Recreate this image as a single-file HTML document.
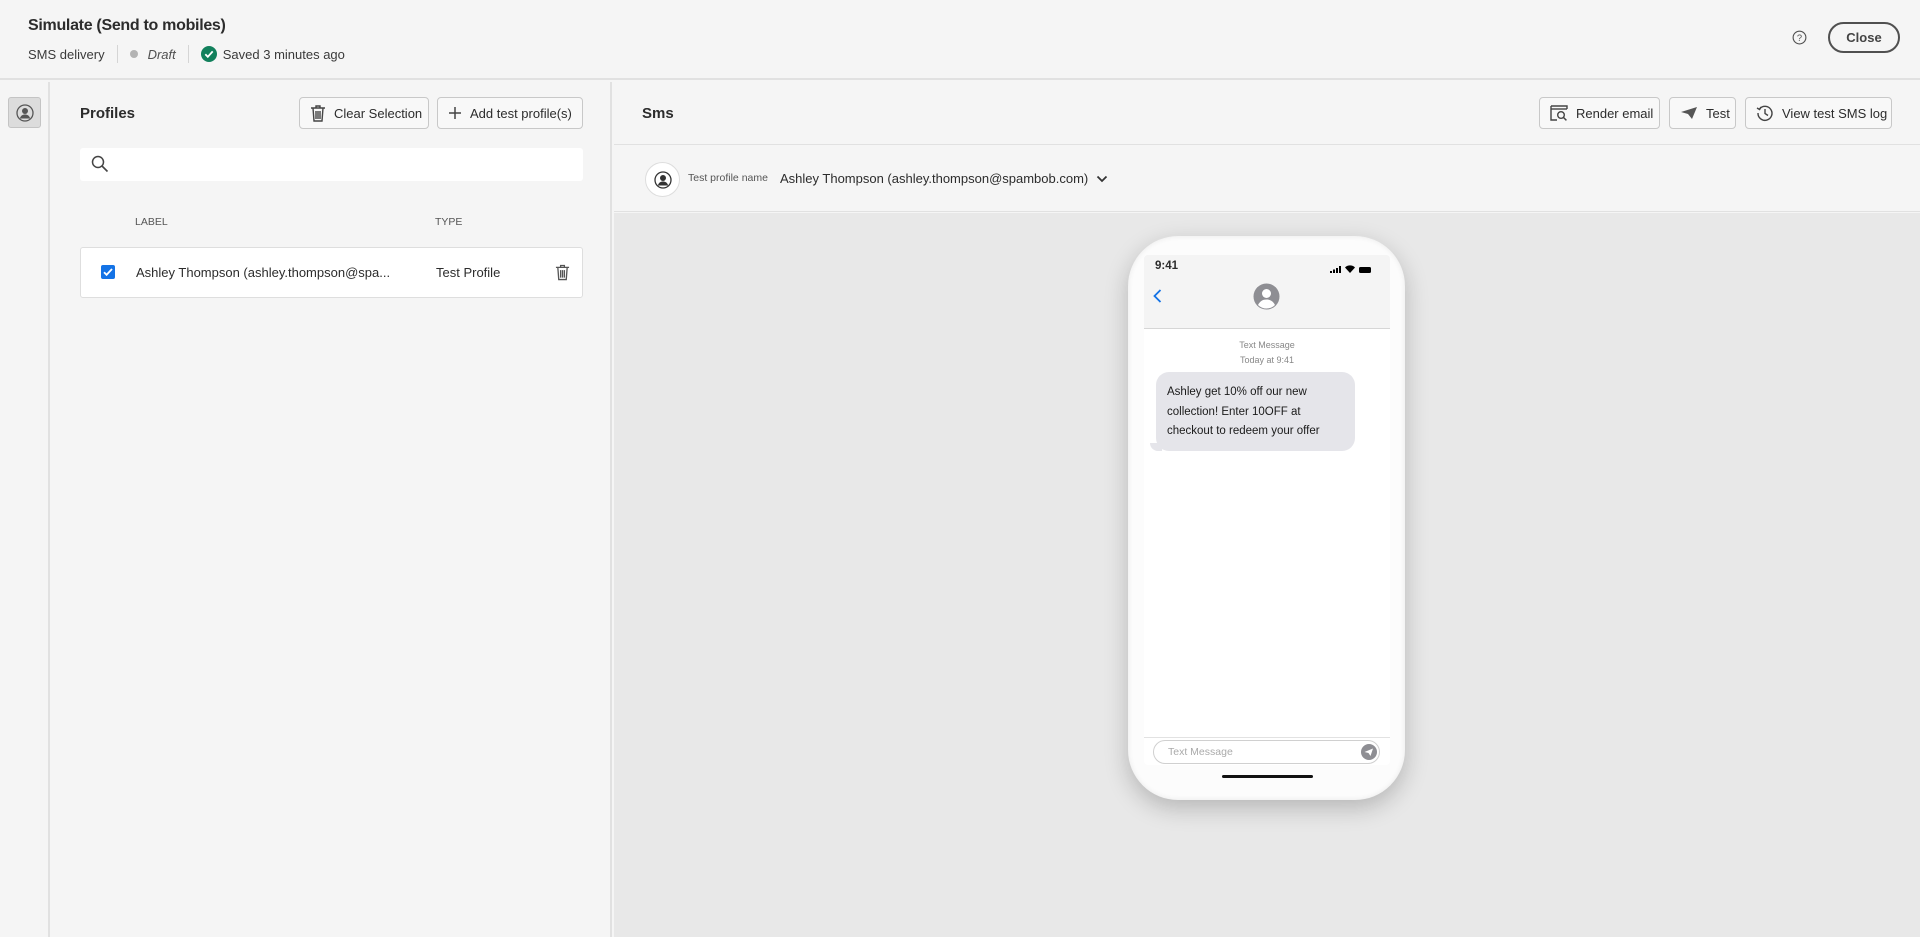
<!DOCTYPE html>
<html><head><meta charset="utf-8"><style>
*{box-sizing:border-box;margin:0;padding:0}
body{width:1920px;height:937px;overflow:hidden;background:#f5f5f5;font-family:"Liberation Sans",sans-serif;color:#2c2c2c;position:relative}
.a{position:absolute;white-space:nowrap}
.btn{position:absolute;border:1px solid #c8c8c8;border-radius:4px;background:#f8f8f8;font-size:13px;color:#2c2c2c;display:flex;align-items:center;padding-left:10px;gap:8px;white-space:nowrap}
svg{display:block}
</style></head><body>
<div class="a" style="left:0;top:0;width:1920px;height:80px;background:#f5f5f5;border-bottom:2px solid #e1e1e1"></div>
<div class="a" style="left:28px;top:17px;font-size:16px;font-weight:bold;color:#2c2c2c;letter-spacing:-0.3px">Simulate (Send to mobiles)</div>
<div class="a" style="left:28px;top:45px;font-size:13px;color:#3a3a3a;display:flex;align-items:center">
<span>SMS delivery</span><span style="width:1px;height:18px;background:#d5d5d5;margin:0 12px"></span>
<span style="width:8px;height:8px;border-radius:50%;background:#b3b3b3;margin-right:10px"></span><i style="color:#505050">Draft</i>
<span style="width:1px;height:18px;background:#d5d5d5;margin:0 12px"></span>
<svg width="16" height="16" viewBox="0 0 16 16"><circle cx="8" cy="8" r="8" fill="#12805c"/><path d="M4.3 8.3l2.5 2.5 4.9-5.4" stroke="#fff" stroke-width="1.8" fill="none"/></svg><span style="margin-left:6px">Saved 3 minutes ago</span></div>
<svg class="a" style="left:1792px;top:30px" width="15" height="15" viewBox="0 0 16 16"><circle cx="8" cy="8" r="6.8" fill="none" stroke="#505050" stroke-width="1.2"/><text x="8" y="11.5" font-size="10" text-anchor="middle" fill="#505050" font-family="Liberation Sans">?</text></svg>
<div class="a" style="left:1828px;top:22px;width:72px;height:31px;border:2px solid #505050;border-radius:16px;font-size:13px;font-weight:bold;color:#444;display:flex;align-items:center;justify-content:center">Close</div>

<div class="a" style="left:0;top:82px;width:50px;height:855px;background:#f5f5f5;border-right:2px solid #e1e1e1"></div>
<div class="a" style="left:8px;top:97px;width:33px;height:31px;background:#dcdcdc;border:1px solid #c4c4c4;border-radius:3px;display:flex;align-items:center;justify-content:center">
<svg width="18" height="18" viewBox="0 0 18 18"><circle cx="9" cy="9" r="8" fill="none" stroke="#555" stroke-width="1.3"/><circle cx="9" cy="7" r="3" fill="#555"/><path d="M3.8 14.5c1-3 2.8-4 5.2-4s4.2 1 5.2 4" fill="#555"/></svg></div>

<div class="a" style="left:52px;top:82px;width:560px;height:855px;background:#f5f5f5;border-right:2px solid #e1e1e1"></div>
<div class="a" style="left:80px;top:105px;font-size:15px;font-weight:bold">Profiles</div>
<div class="btn" style="left:299px;top:97px;width:130px;height:32px"><svg width="16" height="17" viewBox="0 0 16 17"><path d="M1 3h14M6 3V1h4v2M3 3l1 13h8l1-13M6 6v8M8 6v8M10 6v8" stroke="#444" stroke-width="1.4" fill="none"/></svg>Clear Selection</div>
<div class="btn" style="left:437px;top:97px;width:146px;height:32px"><svg width="14" height="14" viewBox="0 0 14 14"><path d="M7 1v12M1 7h12" stroke="#444" stroke-width="1.5"/></svg>Add test profile(s)</div>
<div class="a" style="left:80px;top:148px;width:503px;height:33px;background:#fff;border-radius:3px"></div>
<svg class="a" style="left:91px;top:155px" width="18" height="18" viewBox="0 0 18 18"><circle cx="7" cy="7" r="5.5" fill="none" stroke="#444" stroke-width="1.5"/><path d="M11 11l5.5 5.5" stroke="#444" stroke-width="1.6"/></svg>
<div class="a" style="left:135px;top:216px;font-size:10.5px;color:#555">LABEL</div>
<div class="a" style="left:435px;top:216px;font-size:10.5px;color:#555">TYPE</div>
<div class="a" style="left:80px;top:247px;width:503px;height:51px;background:#fff;border:1px solid #dedede;border-radius:3px"></div>
<div class="a" style="left:101px;top:265px;width:14px;height:14px;background:#1473e6;border-radius:2px"><svg width="14" height="14" viewBox="0 0 14 14"><path d="M3 7.2l2.6 2.6L11 4" stroke="#fff" stroke-width="1.8" fill="none"/></svg></div>
<div class="a" style="left:136px;top:265px;font-size:13px">Ashley Thompson (ashley.thompson@spa...</div>
<div class="a" style="left:436px;top:265px;font-size:13px">Test Profile</div>
<svg class="a" style="left:555px;top:264px" width="15" height="17" viewBox="0 0 16 17"><path d="M1 3h14M6 3V1h4v2M3 3l1 13h8l1-13M6 6v8M8 6v8M10 6v8" stroke="#555" stroke-width="1.4" fill="none"/></svg>

<div class="a" style="left:614px;top:82px;width:1306px;height:63px;background:#f5f5f5;border-bottom:1px solid #e1e1e1"></div>
<div class="a" style="left:642px;top:105px;font-size:15px;font-weight:bold">Sms</div>
<div class="btn" style="left:1539px;top:97px;width:121px;height:32px"><svg width="18" height="16" viewBox="0 0 18 16"><path d="M1 1h16v3M1 1v14h6" stroke="#444" stroke-width="1.4" fill="none"/><path d="M1 4h16" stroke="#444" stroke-width="1.4"/><circle cx="11" cy="10" r="3.3" fill="none" stroke="#444" stroke-width="1.4"/><path d="M13.4 12.4l3 3" stroke="#444" stroke-width="1.5"/></svg>Render email</div>
<div class="btn" style="left:1669px;top:97px;width:67px;height:32px"><svg width="18" height="14" viewBox="0 0 18 14"><path d="M1 6L17 1 12 13 8 8z" fill="#555"/></svg>Test</div>
<div class="btn" style="left:1745px;top:97px;width:147px;height:32px"><svg width="18" height="18" viewBox="0 0 18 18"><path d="M3.5 5A7 7 0 1 1 2 9" stroke="#444" stroke-width="1.4" fill="none"/><path d="M1 4l2.6 1.5L5 3" stroke="#444" stroke-width="1.4" fill="none"/><path d="M9 5v4.5l3 2" stroke="#444" stroke-width="1.4" fill="none"/></svg>View test SMS log</div>

<div class="a" style="left:614px;top:146px;width:1306px;height:66px;background:#f5f5f5;border-bottom:1px solid #e1e1e1"></div>
<div class="a" style="left:645px;top:162px;width:35px;height:35px;border-radius:50%;background:#fff;border:1px solid #ddd;display:flex;align-items:center;justify-content:center"><svg width="18" height="18" viewBox="0 0 18 18"><circle cx="9" cy="9" r="8" fill="none" stroke="#333" stroke-width="1.3"/><circle cx="9" cy="7" r="3" fill="#333"/><path d="M3.8 14.5c1-3 2.8-4 5.2-4s4.2 1 5.2 4" fill="#333"/></svg></div>
<div class="a" style="left:688px;top:172px;font-size:10.5px;color:#555">Test profile name</div>
<div class="a" style="left:780px;top:171px;font-size:13px;color:#2c2c2c">Ashley Thompson (ashley.thompson@spambob.com)</div>
<svg class="a" style="left:1096px;top:175px" width="12" height="8" viewBox="0 0 12 8"><path d="M1.5 1.5L6 6l4.5-4.5" stroke="#333" stroke-width="1.8" fill="none"/></svg>

<div class="a" style="left:614px;top:213px;width:1306px;height:724px;background:#e8e8e8"></div>
<div class="a" style="left:1128px;top:236px;width:277px;height:564px;background:#fcfcfc;border-radius:50px;box-shadow:0 8px 24px rgba(0,0,0,.22),inset 0 0 6px rgba(0,0,0,.08)"></div>
<div class="a" style="left:1144px;top:255px;width:246px;height:510px;background:#fff;overflow:hidden;border-radius:4px">
<div class="a" style="left:0;top:0;width:246px;height:74px;background:#f4f4f4;border-bottom:1px solid #d6d6d6"></div>
<div class="a" style="left:11px;top:5px;font-size:11.5px;font-weight:bold">9:41</div>
<div class="a" style="left:186px;top:10px;display:flex;gap:4px;align-items:flex-end"><svg width="11" height="7" viewBox="0 0 11 7"><rect x="0" y="5" width="2" height="2"/><rect x="3" y="3.5" width="2" height="3.5"/><rect x="6" y="2" width="2" height="5"/><rect x="9" y="0" width="2" height="7"/></svg><svg width="10" height="8" viewBox="0 0 10 8"><path d="M0 2.5a7 7 0 0 1 10 0L5 8z"/></svg><svg width="12" height="6" viewBox="0 0 12 6"><rect width="12" height="6" rx="1.5"/></svg></div>
<svg class="a" style="left:9px;top:34px" width="9" height="14" viewBox="0 0 9 14"><path d="M7.5 1L1.5 7l6 6" stroke="#1473e6" stroke-width="1.8" fill="none"/></svg>
<svg class="a" style="left:109px;top:28px" width="27" height="27" viewBox="0 0 27 27"><circle cx="13.5" cy="13.5" r="13" fill="#8e8e93"/><circle cx="13.5" cy="10.5" r="4.5" fill="#fff"/><path d="M5 22c2-4 5-5.5 8.5-5.5S20 18 22 22a12 12 0 0 1-17 0z" fill="#fff"/></svg>
<div class="a" style="left:0;top:83px;width:246px;text-align:center;font-size:9px;color:#888;line-height:15px">Text Message<br>Today at 9:41</div>
<div class="a" style="left:12px;top:117px;width:199px;height:79px;background:#e5e5ea;border-radius:13px;padding:11px 11px;font-size:11.5px;line-height:19.5px;color:#1a1a1a;white-space:normal">Ashley get 10% off our new collection! Enter 10OFF at checkout to redeem your offer</div>
<div class="a" style="left:6px;top:188px;width:12px;height:8px;background:#e5e5ea;border-radius:0 0 0 10px"></div>
<div class="a" style="left:0;top:482px;width:246px;height:1px;background:#e2e2e2"></div>
<div class="a" style="left:9px;top:485px;width:227px;height:24px;border:1px solid #d0d0d0;border-radius:12px;font-size:10.5px;color:#aaa;padding:5px 0 0 14px">Text Message</div>
<svg class="a" style="left:217px;top:489px" width="16" height="16" viewBox="0 0 16 16"><circle cx="8" cy="8" r="8" fill="#8e8e93"/><path d="M3.5 8L12 4.5 9.5 12 7.5 9z" fill="#fff"/></svg>
</div>
<div class="a" style="left:1222px;top:775px;width:91px;height:3px;background:#111;border-radius:2px"></div>
</body></html>
